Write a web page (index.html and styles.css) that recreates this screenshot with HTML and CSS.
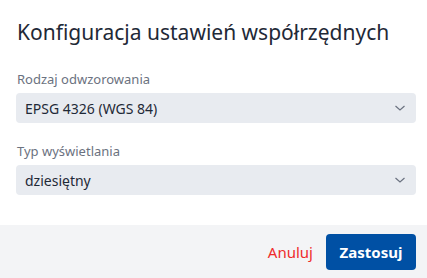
FILE: index.html
```html
<!DOCTYPE html>
<html lang="pl">
<head>
<meta charset="utf-8">
<link rel="stylesheet" href="styles.css">
</head>
<body>
<div class="dialog">
  <div class="content">
    <h1 class="title">Konfiguracja ustawień współrzędnych</h1>
    <div class="field">
      <label class="label">Rodzaj odwzorowania</label>
      <div class="select">
        <span class="value">EPSG 4326 (WGS 84)</span>
        <svg class="chevron" width="12" height="8" viewBox="0 0 12 8"><path d="M1.5 2 L6 6 L10.5 2" fill="none" stroke="#6b7280" stroke-width="1.2"/></svg>
      </div>
    </div>
    <div class="field">
      <label class="label">Typ wyświetlania</label>
      <div class="select">
        <span class="value">dziesiętny</span>
        <svg class="chevron" width="12" height="8" viewBox="0 0 12 8"><path d="M1.5 2 L6 6 L10.5 2" fill="none" stroke="#6b7280" stroke-width="1.2"/></svg>
      </div>
    </div>
  </div>
  <div class="footer">
    <button class="btn-cancel">Anuluj</button>
    <button class="btn-apply">Zastosuj</button>
  </div>
</div>
</body>
</html>
```
FILE: styles.css
```css
html, body {
  margin: 0;
  padding: 0;
  background: #ffffff;
}
body {
  font-family: "Noto Sans", sans-serif;
  width: 427px;
  height: 278px;
  overflow: hidden;
}
.dialog {
  display: flex;
  flex-direction: column;
  height: 278px;
}
.content {
  box-sizing: border-box;
  padding: 18px 11px 0 16px;
  height: 225px;
}
.title {
  margin: 0 0 0 1px;
  font-size: 21px;
  font-weight: 400;
  color: #1f2937;
  line-height: 28px;
}
.field {
  margin-top: 24px;
  display: flex;
  flex-direction: column;
}
.field + .field {
  margin-top: 19px;
}
.label {
  font-size: 13px;
  color: #6b7280;
  line-height: 18px;
  margin-bottom: 5px;
  padding-left: 1px;
}
.select {
  height: 30px;
  background: #e8ebf0;
  border-radius: 4px;
  display: flex;
  align-items: center;
  justify-content: space-between;
  padding: 0 10px 0 9px;
}
.value {
  font-size: 14px;
  color: #1f2937;
}
.footer {
  flex: 1;
  background: #f3f4f6;
  display: flex;
  justify-content: flex-end;
  align-items: center;
  gap: 13px;
  padding: 0 11px 0 0;
}
.btn-cancel {
  border: none;
  background: none;
  font-family: inherit;
  font-size: 15px;
  color: #ef2b2b;
  padding: 0;
  cursor: pointer;
}
.btn-apply {
  border: none;
  background: #0050a4;
  color: #ffffff;
  font-family: inherit;
  font-size: 15px;
  font-weight: 700;
  border-radius: 4px;
  width: 90px;
  height: 36px;
  padding: 0;
}
```
